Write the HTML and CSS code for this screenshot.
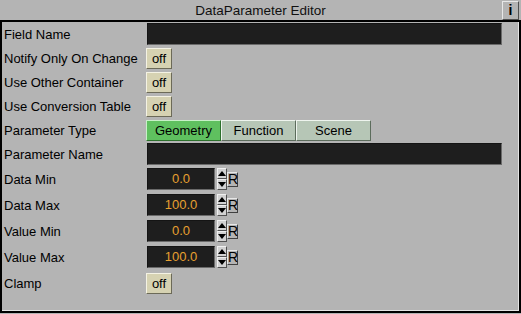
FILE: index.html
```html
<!DOCTYPE html>
<html>
<head>
	<meta charset='utf-8'>
	<title>DataParameter Editor</title>
	<link rel="stylesheet" href="styles.css">
</head>
<body>
	<div id="window">
		<div class="titlebar">
			<span></span>
			<span class="title">DataParameter Editor</span>
			<span class="info">i</span>
		</div>
		<div class="frame">
			<div class="row">
				<span class="label">Field Name</span>
				<div class="textfield"></div>
			</div>
			<div class="row">
				<span class="label">Notify Only On Change</span>
				<div><span class="toggle">off</span></div>
			</div>
			<div class="row">
				<span class="label">Use Other Container</span>
				<div><span class="toggle">off</span></div>
			</div>
			<div class="row">
				<span class="label">Use Conversion Table</span>
				<div><span class="toggle">off</span></div>
			</div>
			<div class="row">
				<span class="label">Parameter Type</span>
				<div class="tabs">
					<span class="tab active">Geometry</span>
					<span class="tab">Function</span>
					<span class="tab">Scene</span>
				</div>
			</div>
			<div class="row">
				<span class="label">Parameter Name</span>
				<div class="textfield"></div>
			</div>
			<div class="row num">
				<span class="label">Data Min</span>
				<div class="numbox">
					<span class="value">0.0</span>
					<span class="spin"><span class="up"></span><span class="down"></span></span>
					<span class="reset">R</span>
				</div>
			</div>
			<div class="row num">
				<span class="label">Data Max</span>
				<div class="numbox">
					<span class="value">100.0</span>
					<span class="spin"><span class="up"></span><span class="down"></span></span>
					<span class="reset">R</span>
				</div>
			</div>
			<div class="row num">
				<span class="label">Value Min</span>
				<div class="numbox">
					<span class="value">0.0</span>
					<span class="spin"><span class="up"></span><span class="down"></span></span>
					<span class="reset">R</span>
				</div>
			</div>
			<div class="row num">
				<span class="label">Value Max</span>
				<div class="numbox">
					<span class="value">100.0</span>
					<span class="spin"><span class="up"></span><span class="down"></span></span>
					<span class="reset">R</span>
				</div>
			</div>
			<div class="row num">
				<span class="label">Clamp</span>
				<div><span class="toggle">off</span></div>
			</div>
		</div>
	</div>
</body>
</html>
```

FILE: styles.css
```css
html, body {margin:0; padding:0;}
body {
	font-family: "Liberation Sans", Arial, sans-serif;
	font-size: 13px;
	color: #000;
	background: #b4b4b4;
}
div#window{
	width: 521px;
	height: 314px;
	background: #b4b4b4;
}
div.titlebar{
	height: 20px;
	display: grid;
	grid-template-columns: 1fr auto 1fr;
	align-items: center;
}
span.title{
	font-size: 13.5px;
	color: #101010;
}
span.info{
	justify-self: end;
	width: 17px;
	height: 19px;
	margin-right: 2px;
	box-sizing: border-box;
	border: 1px solid;
	border-color: #e8e8e8 #505050 #505050 #e8e8e8;
	text-align: center;
	font-weight: bold;
	font-size: 14px;
	line-height: 17px;
}
div.frame{
	height: 293px;
	box-sizing: border-box;
	border: 2px solid #000;
	box-shadow: inset -1px -1px 0 #e4e4e4;
	padding: 0 17px 0 0;
}
div.row{
	display: grid;
	grid-template-columns: 145px 1fr;
	align-items: center;
	height: 24px;
}
div.row.num{
	height: 26px;
}
span.label{
	padding-left: 2px;
	white-space: nowrap;
}
div.textfield{
	height: 22px;
	box-sizing: border-box;
	background: #1e1e1e;
	border: 1px solid;
	border-color: #141414 #6a6a6a #6a6a6a #141414;
}
span.toggle{
	display: inline-block;
	width: 26px;
	height: 21px;
	margin-left: -1px;
	box-sizing: border-box;
	border: 1px solid;
	border-color: #f4f2e4 #6c6a58 #6c6a58 #f4f2e4;
	background: #d6d2b2;
	text-align: center;
	line-height: 19px;
}
div.tabs{
	display: flex;
	margin-left: -1px;
}
span.tab{
	width: 75px;
	height: 21px;
	box-sizing: border-box;
	border: 1px solid;
	border-color: #eef4ee #5c6c5c #5c6c5c #eef4ee;
	background: #b6c6b6;
	text-align: center;
	line-height: 19px;
}
span.tab.active{
	background: #5fc05f;
	border-color: #c8f0c8 #2c702c #2c702c #c8f0c8;
}
div.numbox{
	display: flex;
	align-items: center;
}
span.value{
	width: 68px;
	height: 22px;
	box-sizing: border-box;
	background: #1e1e1e;
	border: 1px solid;
	border-color: #141414 #6a6a6a #6a6a6a #141414;
	color: #e8a030;
	text-align: center;
	line-height: 20px;
}
span.spin{
	display: flex;
	flex-direction: column;
	margin-left: 2px;
	width: 10px;
}
span.up, span.down{
	height: 11px;
	box-sizing: border-box;
	background: #d2d2d2;
	border: 1px solid;
	border-color: #f0f0f0 #505050 #505050 #f0f0f0;
	position: relative;
}
span.up::after, span.down::after{
	content: "";
	position: absolute;
	left: 0px;
	border-left: 4px solid transparent;
	border-right: 4px solid transparent;
}
span.up::after{
	top: 2px;
	border-bottom: 5px solid #000;
}
span.down::after{
	top: 2px;
	border-top: 5px solid #000;
}
span.reset{
	width: 11px;
	height: 15px;
	box-sizing: border-box;
	border: 1px solid;
	border-color: #e8e8e8 #404040 #404040 #e8e8e8;
	font-size: 14px;
	line-height: 13px;
	text-align: center;
}
```
